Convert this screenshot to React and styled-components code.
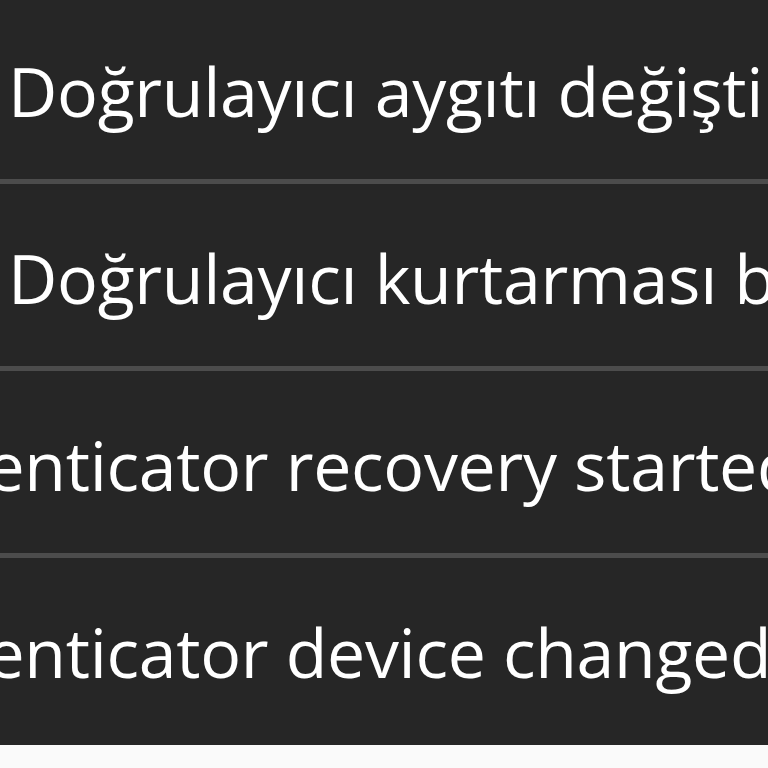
import styled, { createGlobalStyle } from 'styled-components';

const GlobalStyle = createGlobalStyle`
  html, body {
    margin: 0;
    padding: 0;
    background: #fafafa;
  }
`;

const rows = [
  { id: 1, text: 'Doğrulayıcı aygıtı değiştirildi', indent: 8 },
  { id: 2, text: 'Doğrulayıcı kurtarması başlatıldı', indent: 8 },
  { id: 3, text: 'Authenticator recovery started', indent: -163 },
  { id: 4, text: 'Authenticator device changed', indent: -163 },
];

function App() {
  return (
    <>
      <GlobalStyle />
      <Frame>
        <Table>
          {rows.map(({ id, text, indent }) => (
            <Row key={id}>
              <Cell $indent={indent}>{text}</Cell>
            </Row>
          ))}
        </Table>
      </Frame>
    </>
  );
}

export default App;

const Frame = styled.div`
  width: 768px;
  height: 745px;
  overflow: hidden;
  background-color: #262626;
`;

const Table = styled.div`
  display: flex;
  flex-direction: column;
  margin-top: -3px;
`;

const Row = styled.div`
  height: 182px;
  border-bottom: 5px solid #4c4c4c;
  overflow: hidden;
  &:last-child {
    border-bottom: none;
  }
`;

const Cell = styled.div`
  height: 176px;
  padding-top: 6px;
  line-height: 176px;
  white-space: nowrap;
  font-family: 'Open Sans', 'Noto Sans', sans-serif;
  font-size: 68px;
  letter-spacing: -0.3px;
  color: #ffffff;
  text-indent: ${({ $indent }) => $indent}px;
`;
